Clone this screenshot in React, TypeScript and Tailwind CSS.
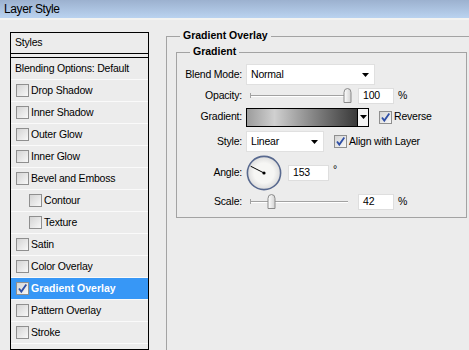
import React from "react";

type Item = { label: string; sub?: boolean; active?: boolean };

const items: Item[] = [
  { label: "Drop Shadow" },
  { label: "Inner Shadow" },
  { label: "Outer Glow" },
  { label: "Inner Glow" },
  { label: "Bevel and Emboss" },
  { label: "Contour", sub: true },
  { label: "Texture", sub: true },
  { label: "Satin" },
  { label: "Color Overlay" },
  { label: "Gradient Overlay", active: true },
  { label: "Pattern Overlay" },
  { label: "Stroke" },
];

const CheckBox = ({ checked }: { checked?: boolean }) => (
  <span className="flex h-[13px] w-[13px] shrink-0 items-center justify-center border border-[#8f8f8f] bg-linear-to-br from-[#d4d4d4] to-[#f8f8f8]">
    {checked && (
      <svg width="11" height="11" viewBox="0 0 11 11">
        <path d="M2 5.5 L4.3 8.6 L9.3 1.6" fill="none" stroke="#2f4fa6" strokeWidth="1.8" />
      </svg>
    )}
  </span>
);

const Arrow = () => (
  <svg width="7" height="4" viewBox="0 0 7 4" className="shrink-0">
    <path d="M0 0 H7 L3.5 4 Z" fill="#000" />
  </svg>
);

const Thumb = () => (
  <svg width="9" height="15" viewBox="0 0 9 15">
    <defs>
      <linearGradient id="th" x1="0" x2="1" y1="0" y2="0">
        <stop offset="0" stopColor="#ffffff" />
        <stop offset="1" stopColor="#d2d2d2" />
      </linearGradient>
    </defs>
    <path d="M1 14.5 V4.5 Q1 0.5 4.5 0.5 Q8 0.5 8 4.5 V14.5 Z" fill="url(#th)" stroke="#8a8a8a" />
  </svg>
);

const Slider = ({ at }: { at: number }) => (
  <div className="relative h-[16px] w-[106px] shrink-0">
    <div className="absolute left-[4px] right-[4px] top-[7px] h-[2px] border-t border-[#a2a2a2] border-b border-b-white" />
    <div className="absolute left-[4px] top-[5px] h-[5px] w-px bg-[#a2a2a2]" />
    <div className="absolute top-0" style={{ left: at }}>
      <Thumb />
    </div>
  </div>
);

const Field = ({ value, w }: { value: string; w: string }) => (
  <div className={`flex h-[16px] items-center border border-[#dedede] bg-white pl-[4px] ${w}`}>{value}</div>
);

const Row = ({ label, className, children }: { label: string; className: string; children: React.ReactNode }) => (
  <div className={`flex items-center ${className}`}>
    <div className="w-[65px] shrink-0 text-right">{label}</div>
    <div className="ml-[4px] flex items-center">{children}</div>
  </div>
);

export default function App() {
  const rad = (153 * Math.PI) / 180;
  const ex = 18 + 15 * Math.cos(rad);
  const ey = 18 - 15 * Math.sin(rad);

  return (
    <div className="flex h-[350px] w-[469px] flex-col overflow-hidden bg-[#ececec] font-['Liberation_Sans',Arial,sans-serif] text-[10.5px] tracking-[-0.2px] text-black">
      <div className="flex h-[18px] shrink-0 items-center bg-linear-to-b from-[#9cb1cf] to-[#bad3f0] pl-[4px] text-[12px] tracking-[-0.4px]">
        Layer Style
      </div>
      <div className="h-[2px] shrink-0 bg-[#f3f3f1]" />

      <div className="flex min-h-0 flex-1">
        {/* styles list */}
        <div className="ml-[10px] mt-[12px] flex w-[139px] shrink-0 flex-col border border-black">
          <div className="flex h-[21px] items-center border-b border-black pl-[4px]">Styles</div>
          <div className="h-[4px] border-b border-black" />
          <div className="flex h-[22px] items-center border-b border-[#fafafa] pl-[4px]">Blending Options: Default</div>
          {items.map((it) => (
            <div
              key={it.label}
              className={`flex h-[22px] items-center gap-[2px] border-b border-[#fafafa] ${it.sub ? "pl-[18px]" : "pl-[5px]"} ${
                it.active ? "bg-[#3797f6] font-bold tracking-normal text-white" : ""
              }`}
            >
              <CheckBox checked={it.active} />
              <span>{it.label}</span>
            </div>
          ))}
        </div>

        {/* gradient overlay group */}
        <div className="ml-[17px] mt-[9px] flex w-[320px] shrink-0 flex-col">
          <div className="flex h-[14px] items-center">
            <div className="h-[7px] w-[14px] self-end border-l border-t border-[#a3a3a3]" />
            <span className="px-[3px] font-bold tracking-normal">Gradient Overlay</span>
            <div className="h-px flex-1 bg-[#a3a3a3]" />
          </div>
          <div className="flex-1 border-l border-[#a3a3a3] pl-[9px] pt-[2px]">
            <div className="flex w-[291px] flex-col">
              <div className="flex h-[14px] items-center">
                <div className="h-[7px] w-[14px] self-end border-l border-t border-[#a3a3a3]" />
                <span className="px-[3px] font-bold tracking-normal">Gradient</span>
                <div className="h-[7px] flex-1 self-end border-r border-t border-[#a3a3a3]" />
              </div>
              <div className="flex flex-col border-b border-l border-r border-[#a3a3a3] pb-[7px] pt-[5px]">
                <Row label="Blend Mode:" className="h-[21px]">
                  <div className="flex h-[21px] w-[129px] items-center justify-between border border-[#e0e0e0] bg-white pl-[4px] pr-[5px]">
                    <span>Normal</span>
                    <Arrow />
                  </div>
                </Row>
                <Row label="Opacity:" className="h-[21px]">
                  <Slider at={97} />
                  <div className="ml-[6px]">
                    <Field value="100" w="w-[36px]" />
                  </div>
                  <span className="ml-[4px]">%</span>
                </Row>
                <Row label="Gradient:" className="mt-[1px] h-[20px]">
                  <div className="flex h-[19px] w-[123px] border border-black">
                    <div className="flex-1 bg-linear-to-r from-[#9c9c9c] via-[#d0d0d0] via-25% to-[#3a3a3a]" />
                    <div className="flex w-[11px] items-center justify-center border-l border-black bg-[#f4f4f4]">
                      <Arrow />
                    </div>
                  </div>
                  <div className="ml-[10px] flex items-center gap-[2px]">
                    <CheckBox checked />
                    <span>Reverse</span>
                  </div>
                </Row>
                <Row label="Style:" className="mt-[4px] h-[21px]">
                  <div className="flex h-[21px] w-[78px] items-center justify-between border border-[#e0e0e0] bg-white pl-[4px] pr-[5px]">
                    <span>Linear</span>
                    <Arrow />
                  </div>
                  <div className="ml-[10px] flex items-center gap-[2px]">
                    <CheckBox checked />
                    <span>Align with Layer</span>
                  </div>
                </Row>
                <Row label="Angle:" className="mt-[3px] h-[35px]">
                  <svg width="36" height="36" viewBox="0 0 36 36" className="shrink-0">
                    <defs>
                      <radialGradient id="dial" cx="0.5" cy="0.5" r="0.5">
                        <stop offset="0.6" stopColor="#f6f6f4" />
                        <stop offset="1" stopColor="#dcdcdc" />
                      </radialGradient>
                    </defs>
                    <circle cx="18" cy="18" r="16.6" fill="url(#dial)" stroke="#58698f" strokeWidth="1.6" />
                    <line x1="18" y1="18" x2={ex} y2={ey} stroke="#000" strokeWidth="1" />
                    <circle cx="18" cy="18" r="1.6" fill="#000" />
                  </svg>
                  <div className="ml-[6px]">
                    <Field value="153" w="w-[41px]" />
                  </div>
                  <span className="ml-[4px] -mt-[6px]">°</span>
                </Row>
                <Row label="Scale:" className="mt-[4px] h-[16px]">
                  <Slider at={21} />
                  <div className="ml-[6px]">
                    <Field value="42" w="w-[36px]" />
                  </div>
                  <span className="ml-[4px]">%</span>
                </Row>
              </div>
            </div>
          </div>
        </div>
      </div>
    </div>
  );
}
